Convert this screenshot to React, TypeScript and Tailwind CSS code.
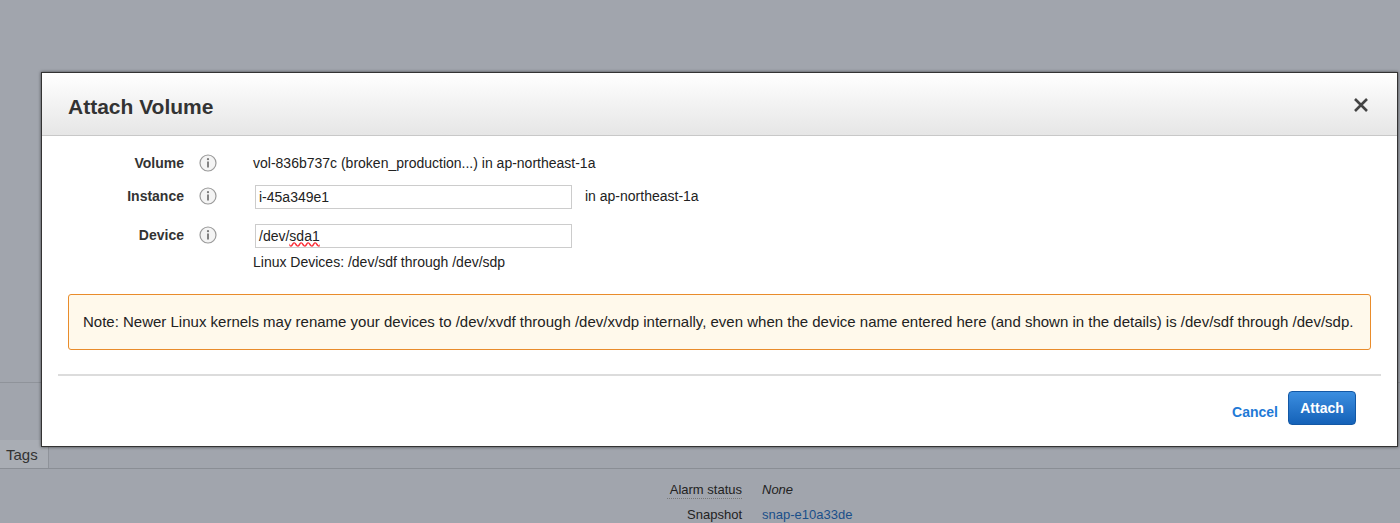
import React from "react";

const Info = () => (
  <svg width="18" height="18" viewBox="0 0 18 18" className="shrink-0">
    <circle cx="9" cy="9" r="8" fill="#f4f4f4" stroke="#9a9a9a" strokeWidth="1.2" />
    <circle cx="9" cy="5.2" r="1.1" fill="#777" />
    <rect x="8.1" y="7.5" width="1.8" height="6" fill="#777" />
  </svg>
);

export default function App() {
  return (
    <div className="relative w-[1400px] h-[523px] overflow-hidden bg-[#a1a5ad]" style={{ fontFamily: '"Liberation Sans", Arial, sans-serif' }}>
      {/* background page */}
      <div className="flex flex-col">
        <div className="h-[383px] border-b border-[#8f939a]" />
        <div className="h-[57px]" />
        <div className="flex h-[29px] border-b border-[#8a8e95]">
          <div className="w-[49px] bg-[#a9adb4] border-r border-[#8f939a] text-[15px] text-[#333] px-[6px] pt-[4px]">Tags</div>
        </div>
        <div className="flex flex-col items-start pl-[667px] pt-[13px] text-[13px] leading-[16px] gap-[8px]">
          <div className="flex gap-[20px]">
            <span className="w-[75px] text-right text-[#222] border-b border-dotted border-[#777]">Alarm status</span>
            <span className="italic text-[#222]">None</span>
          </div>
          <div className="flex gap-[20px]">
            <span className="w-[75px] text-right text-[#222]">Snapshot</span>
            <span className="text-[#1a4f8a]">snap-e10a33de</span>
          </div>
        </div>
      </div>

      {/* modal */}
      <div className="absolute left-[41px] top-[72px] w-[1357px] h-[375px] bg-white border border-[#333] shadow-[0_0_3px_rgba(0,0,0,0.6)] flex flex-col">
        <div className="h-[63px] bg-gradient-to-b from-white to-[#e6e6e6] border-b border-[#c8c8c8] flex items-center justify-between pl-[26px] pr-[28px] pt-[5px]">
          <span className="text-[21px] font-bold text-[#333]">Attach Volume</span>
          <svg width="16" height="16" viewBox="0 0 16 16" className="-mt-[3px]"><path d="M2 2L14 14M14 2L2 14" stroke="#444" strokeWidth="2.6" /></svg>
        </div>
        <div className="flex flex-col pt-[17px] text-[14px] text-[#222]">
          <div className="flex items-center h-[20px]">
            <span className="w-[142px] text-right font-bold text-[#333]">Volume</span>
            <span className="ml-[15px]"><Info /></span>
            <span className="ml-[36px]">vol-836b737c (broken_production...) in ap-northeast-1a</span>
          </div>
          <div className="flex items-start mt-[12px]">
            <span className="w-[142px] text-right font-bold text-[#333] mt-[1px]">Instance</span>
            <span className="ml-[15px] mt-[2px]"><Info /></span>
            <div className="ml-[38px] w-[317px] h-[24px] border border-[#ccc] px-[3px] flex items-center text-[14px]">i-45a349e1</div>
            <span className="ml-[13px] mt-[1px]">in ap-northeast-1a</span>
          </div>
          <div className="flex items-start mt-[15px]">
            <span className="w-[142px] text-right font-bold text-[#333] mt-[1px]">Device</span>
            <span className="ml-[15px] mt-[2px]"><Info /></span>
            <div className="ml-[38px] flex flex-col">
              <div className="w-[317px] h-[24px] border border-[#ccc] px-[3px] flex items-center">/dev/<span className="underline decoration-wavy decoration-red-500">sda1</span></div>
              <span className="mt-[4px] -ml-[2px] text-[14px]">Linux Devices: /dev/sdf through /dev/sdp</span>
            </div>
          </div>
          <div className="mx-[26px] mt-[21px] h-[56px] rounded-[3px] border border-[#e98c2b] bg-[#fff9eb] flex items-center pl-[14px] text-[15px]">
            Note: Newer Linux kernels may rename your devices to /dev/xvdf through /dev/xvdp internally, even when the device name entered here (and shown in the details) is /dev/sdf through /dev/sdp.
          </div>
          <div className="mx-[16px] mt-[24px] border-t-2 border-[#dcdcdc]" />
          <div className="flex justify-end items-center gap-[10px] pr-[41px] mt-[15px]">
            <span className="text-[#1f7ad6] font-bold text-[14px] mt-[8px]">Cancel</span>
            <div className="w-[68px] h-[34px] rounded-[4px] bg-gradient-to-b from-[#3b8ee0] to-[#1462b8] border border-[#1358a5] text-white font-bold text-[14px] flex items-center justify-center">Attach</div>
          </div>
        </div>
      </div>
    </div>
  );
}
